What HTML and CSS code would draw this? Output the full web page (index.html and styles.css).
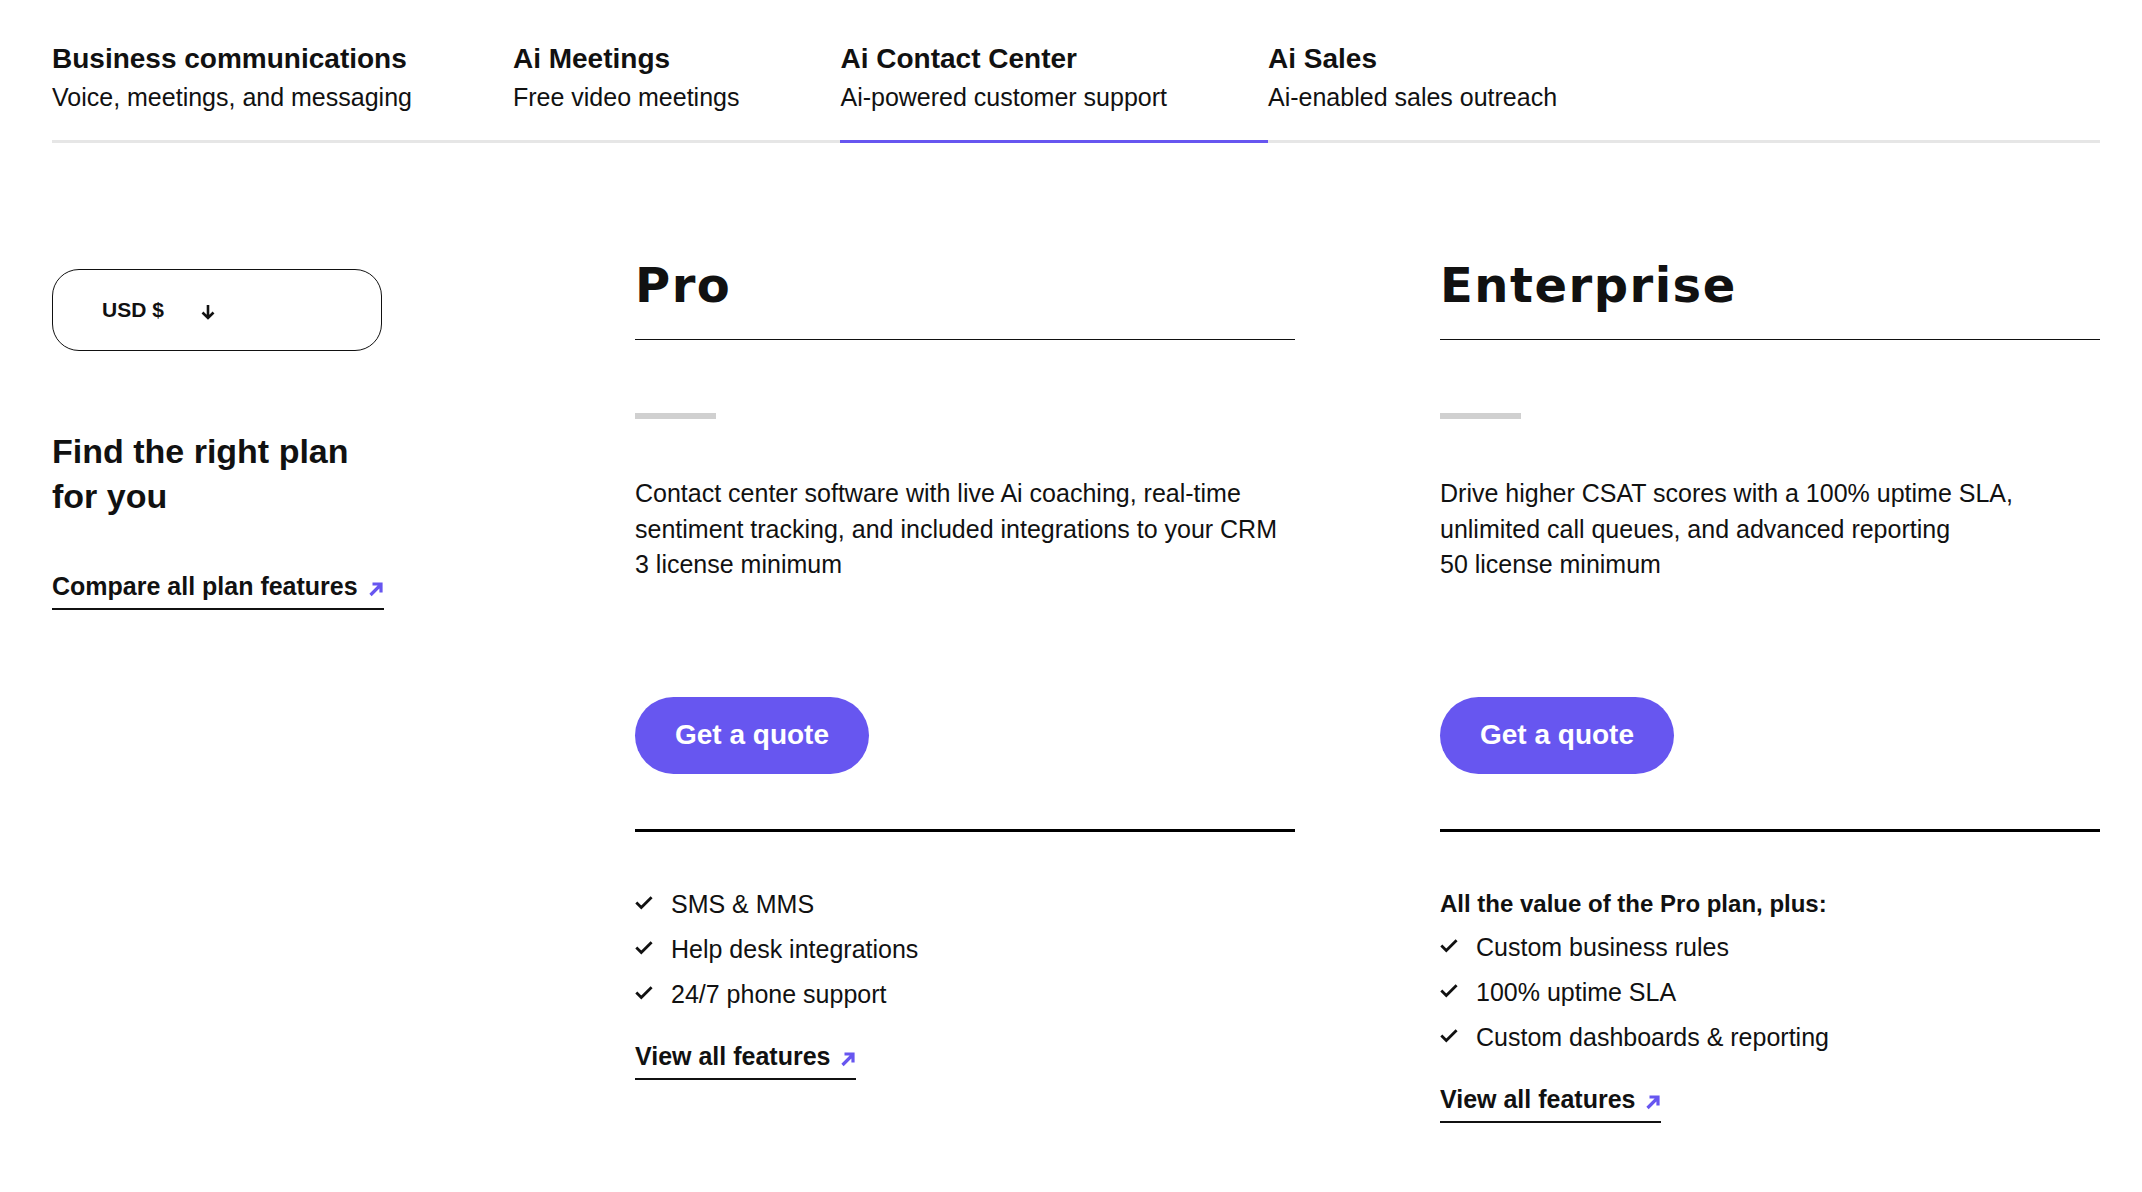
FILE: index.html
```html
<!DOCTYPE html>
<html lang="en">
<head>
<meta charset="utf-8">
<title>Plans</title>
<link rel="stylesheet" href="styles.css">
</head>
<body>
<div class="page">
  <nav class="tabs">
    <a class="tab">
      <span class="tab-title">Business communications</span>
      <span class="tab-sub">Voice, meetings, and messaging</span>
    </a>
    <a class="tab">
      <span class="tab-title">Ai Meetings</span>
      <span class="tab-sub">Free video meetings</span>
    </a>
    <a class="tab active">
      <span class="tab-title">Ai Contact Center</span>
      <span class="tab-sub">Ai-powered customer support</span>
    </a>
    <a class="tab">
      <span class="tab-title">Ai Sales</span>
      <span class="tab-sub">Ai-enabled sales outreach</span>
    </a>
  </nav>

  <main class="plans">
    <aside class="intro">
      <button class="currency">
        <span>USD $</span>
        <svg class="down" width="14" height="16" viewBox="0 0 14 16"><path d="M7 1 V14 M1.5 8.5 L7 14 L12.5 8.5" fill="none" stroke="#111" stroke-width="2.6"/></svg>
      </button>
      <h3 class="intro-title">Find the right plan<br>for you</h3>
      <a class="link">Compare all plan features
        <svg class="arrow" width="16" height="16" viewBox="0 0 16 16"><path d="M2.5 14 L12.5 4 M4.5 3 H13 V11.5" fill="none" stroke="#6756f0" stroke-width="3.2"/></svg>
      </a>
    </aside>

    <section class="plan">
      <h2 class="plan-name">Pro</h2>
      <div class="price-bar"></div>
      <p class="desc">Contact center software with live Ai coaching, real-time sentiment tracking, and included integrations to your CRM<br>3 license minimum</p>
      <a class="cta">Get a quote</a>
      <div class="thick-rule"></div>
      <ul class="features">
        <li><svg class="check" width="18" height="14" viewBox="0 0 18 14"><path d="M1.3 6.6 L6.3 11.6 L16.6 1.3" fill="none" stroke="#111" stroke-width="2.8"/></svg>SMS &amp; MMS</li>
        <li><svg class="check" width="18" height="14" viewBox="0 0 18 14"><path d="M1.3 6.6 L6.3 11.6 L16.6 1.3" fill="none" stroke="#111" stroke-width="2.8"/></svg>Help desk integrations</li>
        <li><svg class="check" width="18" height="14" viewBox="0 0 18 14"><path d="M1.3 6.6 L6.3 11.6 L16.6 1.3" fill="none" stroke="#111" stroke-width="2.8"/></svg>24/7 phone support</li>
      </ul>
      <a class="link">View all features
        <svg class="arrow" width="16" height="16" viewBox="0 0 16 16"><path d="M2.5 14 L12.5 4 M4.5 3 H13 V11.5" fill="none" stroke="#6756f0" stroke-width="3.2"/></svg>
      </a>
    </section>

    <section class="plan">
      <h2 class="plan-name">Enterprise</h2>
      <div class="price-bar"></div>
      <p class="desc">Drive higher CSAT scores with a 100% uptime SLA, unlimited call queues, and advanced reporting<br>50 license minimum</p>
      <a class="cta">Get a quote</a>
      <div class="thick-rule"></div>
      <ul class="features">
        <li class="features-head">All the value of the Pro plan, plus:</li>
        <li><svg class="check" width="18" height="14" viewBox="0 0 18 14"><path d="M1.3 6.6 L6.3 11.6 L16.6 1.3" fill="none" stroke="#111" stroke-width="2.8"/></svg>Custom business rules</li>
        <li><svg class="check" width="18" height="14" viewBox="0 0 18 14"><path d="M1.3 6.6 L6.3 11.6 L16.6 1.3" fill="none" stroke="#111" stroke-width="2.8"/></svg>100% uptime SLA</li>
        <li><svg class="check" width="18" height="14" viewBox="0 0 18 14"><path d="M1.3 6.6 L6.3 11.6 L16.6 1.3" fill="none" stroke="#111" stroke-width="2.8"/></svg>Custom dashboards &amp; reporting</li>
      </ul>
      <a class="link">View all features
        <svg class="arrow" width="16" height="16" viewBox="0 0 16 16"><path d="M2.5 14 L12.5 4 M4.5 3 H13 V11.5" fill="none" stroke="#6756f0" stroke-width="3.2"/></svg>
      </a>
    </section>
  </main>
</div>
</body>
</html>
```

FILE: styles.css
```css
* { box-sizing: border-box; }

html, body {
  margin: 0;
  background: #fff;
}

body {
  font-family: "Liberation Sans", Arial, sans-serif;
  color: #111;
}

.page {
  padding: 0 42px 60px 52px;
}

/* Tabs */
.tabs {
  display: flex;
  border-bottom: 3px solid #e6e6e6;
}

.tab {
  display: flex;
  flex-direction: column;
  padding: 40px 101px 24px 0;
  margin-bottom: -3px;
  border-bottom: 3px solid transparent;
  color: #111;
  text-decoration: none;
}

.tab.active {
  border-bottom-color: #6756f0;
}

.tab-title {
  font-size: 28px;
  font-weight: 700;
  line-height: 38px;
}

.tab-sub {
  font-size: 25px;
  line-height: 38px;
}

/* Plans grid */
.plans {
  display: grid;
  grid-template-columns: 438px 660px 660px;
  column-gap: 145px;
  margin-top: 113px;
  align-items: start;
}

.intro {
  display: flex;
  flex-direction: column;
  align-items: flex-start;
}

.currency {
  margin-top: 13px;
  width: 330px;
  height: 82px;
  border: 1.5px solid #111;
  border-radius: 27px;
  background: #fff;
  display: flex;
  align-items: center;
  gap: 37px;
  padding: 0 0 0 49px;
  font-family: "Liberation Sans", Arial, sans-serif;
  font-size: 21px;
  font-weight: 700;
  color: #111;
}

.currency .down {
  margin-top: 3px;
}

.intro-title {
  margin: 78px 0 0;
  font-size: 34px;
  line-height: 45px;
  font-weight: 700;
}

.intro .link {
  margin-top: 49px;
}

.link {
  display: inline-flex;
  align-items: center;
  gap: 10px;
  font-size: 25px;
  font-weight: 700;
  line-height: 36px;
  padding-bottom: 4px;
  border-bottom: 2px solid #111;
  color: #111;
  text-decoration: none;
}

.link .arrow {
  margin-top: 6px;
}

/* Plan column */
.plan {
  display: flex;
  flex-direction: column;
  align-items: flex-start;
}

.plan-name {
  align-self: stretch;
  margin: 0;
  font-family: "DejaVu Sans", "Liberation Sans", sans-serif;
  font-size: 48px;
  line-height: 58px;
  font-weight: 700;
  letter-spacing: 1.5px;
  padding-bottom: 25px;
  border-bottom: 1.5px solid #111;
}

.price-bar {
  margin-top: 73px;
  width: 81px;
  height: 6px;
  background: #d0d0d0;
}

.desc {
  margin: 57px 0 0;
  font-size: 25px;
  line-height: 35.5px;
}

.cta {
  margin-top: 114px;
  height: 77px;
  padding: 0 40px;
  border-radius: 39px;
  background: #6756f0;
  color: #fff;
  font-size: 28px;
  font-weight: 700;
  display: inline-flex;
  align-items: center;
  text-decoration: none;
}

.thick-rule {
  align-self: stretch;
  margin-top: 55px;
  height: 3px;
  background: #000;
}

.features {
  list-style: none;
  margin: 50px 0 0;
  padding: 0;
}

.features li {
  display: flex;
  align-items: center;
  gap: 18px;
  font-size: 25px;
  line-height: 45px;
}

.features li.features-head {
  font-size: 24px;
  font-weight: 700;
  line-height: 43px;
}

.features .check {
  flex: none;
  margin-top: -3px;
}

.plan .link {
  margin-top: 21px;
}
```
